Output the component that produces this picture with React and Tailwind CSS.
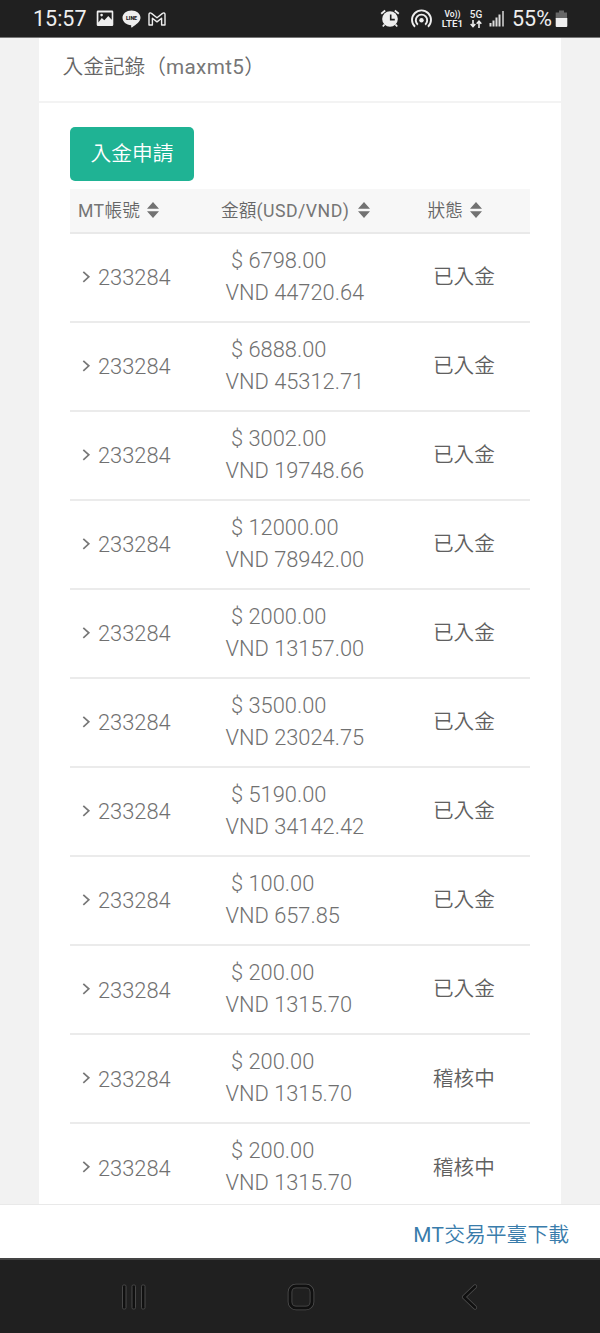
import React from "react";

const records = [
  ["6798.00", "44720.64", "已入金"],
  ["6888.00", "45312.71", "已入金"],
  ["3002.00", "19748.66", "已入金"],
  ["12000.00", "78942.00", "已入金"],
  ["2000.00", "13157.00", "已入金"],
  ["3500.00", "23024.75", "已入金"],
  ["5190.00", "34142.42", "已入金"],
  ["100.00", "657.85", "已入金"],
  ["200.00", "1315.70", "已入金"],
  ["200.00", "1315.70", "稽核中"],
  ["200.00", "1315.70", "稽核中"],
];

function StatusBar() {
  return (
    <header className="flex h-[38px] shrink-0 items-center border-b border-[#777] bg-[#202020] pl-[33px] text-[#eee]">
      <span className="w-[63px] pt-px text-[21.5px] leading-[38px] whitespace-nowrap">15:57</span>
      <svg className="h-[17px] w-[18px]" viewBox="0 0 18 17">
        <path fillRule="evenodd" fill="#eee" d="M2 0.5h14q1.3 0 1.3 1.3v13q0 1.3-1.3 1.3H2q-1.3 0-1.3-1.3v-13Q.7.5 2 .5ZM2.400 2.500v10l3.400-4.600 2.500 2.400 4-4.400 3.400 3.800V2.500ZM5.600 3.800a1.300 1.300 0 1 1 0 2.600 1.300 1.300 0 0 1 0-2.600Z" />
      </svg>
      <svg className="ml-[8px] h-[18px] w-[19px]" viewBox="0 0 19 18">
        <path fill="#eee" d="M9.5.5c5 0 9 3.2 9 7.3 0 3.6-4.3 7-8.5 9.6-1 .6-.9-.6-.8-2.2C4.300 15 .5 11.800.5 7.800.5 3.700 4.500.5 9.500.5Z" />
        <text x="9.5" y="9.9" textAnchor="middle" fontSize="5.3" fontWeight="900" fill="#202020">LINE</text>
      </svg>
      <svg className="ml-[7px] h-[14px] w-[18px]" viewBox="0 0 18 14">
        <path fill="none" stroke="#eee" strokeWidth="1.4" strokeLinejoin="round" d="M1 2.200C1 .8 2.600.6 3.500 1.400L9 5.700l5.500-4.300c.9-.8 2.500-.6 2.500.8V13h-3.400V6.300L9 9.900 4.400 6.300V13H1Z" />
      </svg>
      <svg className="ml-[214px] h-[19px] w-[20px]" viewBox="0 0 20 19">
        <circle cx="10" cy="10" r="7.8" fill="#eee" />
        <path d="M1.200 4.800 5.200 1.500M18.800 4.800l-4-3.300M4.500 15.500l-1.700 2M15.500 15.500l1.700 2" stroke="#eee" strokeWidth="1.8" />
        <path d="M10.700 5.600v5h4.100" fill="none" stroke="#202020" strokeWidth="1.6" />
      </svg>
      <svg className="ml-[10px] h-[19px] w-[23px]" viewBox="0 0 22 19">
        <circle cx="11" cy="11.200" r="2.200" fill="#eee" />
        <path d="M4.500 17.800A9.500 9.500 0 1 1 17.500 17.800M7.300 15.700A5.700 5.700 0 1 1 14.700 15.700" fill="none" stroke="#eee" strokeWidth="1.9" />
      </svg>
      <div className="ml-[8px] flex w-[23px] flex-col items-center gap-px text-[9.800px] leading-[9px] font-semibold whitespace-nowrap">
        <span className="text-[8.500px] leading-[8px]">Vo))</span>
        <span>LTE1</span>
      </div>
      <div className="ml-[5px] flex w-[14px] flex-col items-center text-[10px] leading-[10px] font-medium">
        <span>5G</span>
        <svg className="h-[8px] w-[12px]" viewBox="0 0 12 8">
          <path d="M3 0v6M.7 4 3 6.500 5.300 4M9 8V1.500M6.700 3.700 9 1.200l2.300 2.500" fill="none" stroke="#eee" strokeWidth="1.6" />
        </svg>
      </div>
      <svg className="ml-[6px] h-[17px] w-[16px]" viewBox="0 0 16 17">
        <path d="M1.500 13v3.500M4.500 10.500v6M7.500 7.500v9M10.500 4.500v12" stroke="#ddd" strokeWidth="2" />
        <path d="M14 1v15.500" stroke="#aaa" strokeWidth="2" />
      </svg>
      <span className="ml-[7px] w-[42px] pt-px text-[21.500px] leading-[38px] whitespace-nowrap">55%</span>
      <svg className="ml-px h-[18px] w-[13px]" viewBox="0 0 13 18">
        <path d="M4 .5h5v2h3v6H.7v-6H4Z" fill="#666" />
        <path d="M.7 8h11.600v8q0 1-1 1H1.700q-1 0-1-1Z" fill="#eee" />
      </svg>
    </header>
  );
}

function SortIcon() {
  return (
    <svg className="-mt-px h-[16px] w-[12px] shrink-0" viewBox="0 0 12 16">
      <path d="M6 0 12 6.700H0ZM6 16 0 9.300h12Z" fill="#727272" />
    </svg>
  );
}

function Heading({ children, wide }) {
  return (
    <div className="flex items-center gap-[7px] whitespace-nowrap">
      <span className={wide ? "w-[130px] pt-[2px]" : "pt-[2px]"}>{children}</span>
      <SortIcon />
    </div>
  );
}

function RecordRow({ usd, vnd, status }) {
  return (
    <div className="grid h-[89.06px] shrink-0 grid-cols-[155px_208px_1fr] border-b-2 border-[#ebebeb] text-[#707070]">
      <div className="flex items-center gap-[7px] pl-[12px] text-[21.850px] font-light">
        <svg className="-mt-px h-[14px] w-[9px]" viewBox="0 0 9 14">
          <path d="m1.300 1.800 5.500 5-5.500 5" fill="none" stroke="#777" strokeWidth="1.700" />
        </svg>
        <span className="pt-[2px]">233284</span>
      </div>
      <div className="pt-[11px] pl-[0.500px] text-[21.850px] leading-[31.500px] font-light whitespace-nowrap">
        <div className="pl-[5.500px]">$ {usd}</div>
        <div>VND {vnd}</div>
      </div>
      <div className="flex items-center text-[20.600px] font-[350] text-[#606060]">{status}</div>
    </div>
  );
}

export default function App() {
  return (
    <div className="flex h-[1333px] w-[600px] flex-col overflow-hidden bg-[#f2f2f2] font-['Roboto','Noto_Sans_CJK_TC',sans-serif] text-[#707070]">
      <StatusBar />
      <main className="mx-[39px] flex h-[1166px] shrink-0 flex-col overflow-hidden bg-white">
        <h1 className="h-[65px] shrink-0 border-b-2 border-[#f3f3f3] pl-[23.500px] text-[20.700px] leading-[59px] font-[350] text-[#666]">
          入金記錄（<span className="font-normal tracking-[0.350px] text-[#777]">maxmt5</span>）
        </h1>
        <section className="flex flex-col px-[31px] pt-[24px]">
          <button className="h-[54px] w-[124px] shrink-0 rounded-[5px] bg-[#1fb394] text-[20.700px] leading-[54px] font-[350] text-white">入金申請</button>
          <div className="mt-[8px] grid h-[45px] shrink-0 grid-cols-[143px_206.500px_1fr] items-center border-b-2 border-[#e9e9e9] bg-[#f7f7f7] pl-[8px] text-[17.700px] font-[350] text-[#666]">
            <Heading><span className="font-normal tracking-[0.400px] text-[#757575]">MT</span>帳號</Heading>
            <Heading wide>金額<span className="font-normal tracking-[0.500px] text-[#757575]">(USD/VND)</span></Heading>
            <Heading>狀態</Heading>
          </div>
          {records.map(([usd, vnd, status], index) => (
            <RecordRow key={index} usd={usd} vnd={vnd} status={status} />
          ))}
        </section>
      </main>
      <footer className="flex h-[54px] shrink-0 items-center justify-end border-t border-[#e9e9e9] bg-white pr-[31px] pt-[8px] text-[20.800px] font-[350] text-[#397cab]">
        <a><span className="font-normal tracking-[0.400px]">MT</span>交易平臺下載</a>
      </footer>
      <nav className="flex h-[75px] shrink-0 items-center border-t-2 border-[#444] bg-[#202020] pl-[120px]">
        <svg className="h-[28px] w-[28px]" viewBox="0 0 28 28">
          <g fill="#101010" stroke="#484848" strokeWidth="1">
            <rect x="2.500" y="2" width="3.500" height="24" rx="1.200" />
            <rect x="12" y="2" width="3.500" height="24" rx="1.200" />
            <rect x="21.500" y="2" width="3.500" height="24" rx="1.200" />
          </g>
        </svg>
        <svg className="ml-[139px] h-[28px] w-[28px]" viewBox="0 0 28 28">
          <rect x="3" y="3" width="22" height="22" rx="6" fill="none" stroke="#505050" strokeWidth="4.600" />
          <rect x="3" y="3" width="22" height="22" rx="6" fill="none" stroke="#101010" strokeWidth="3" />
        </svg>
        <svg className="ml-[145px] h-[28px] w-[18px]" viewBox="0 0 18 28">
          <path d="M15 3.500 4 14l11 10.500" fill="none" stroke="#505050" strokeWidth="4.200" strokeLinecap="round" strokeLinejoin="round" />
          <path d="M15 3.500 4 14l11 10.500" fill="none" stroke="#101010" strokeWidth="2.700" strokeLinecap="round" strokeLinejoin="round" />
        </svg>
      </nav>
    </div>
  );
}
